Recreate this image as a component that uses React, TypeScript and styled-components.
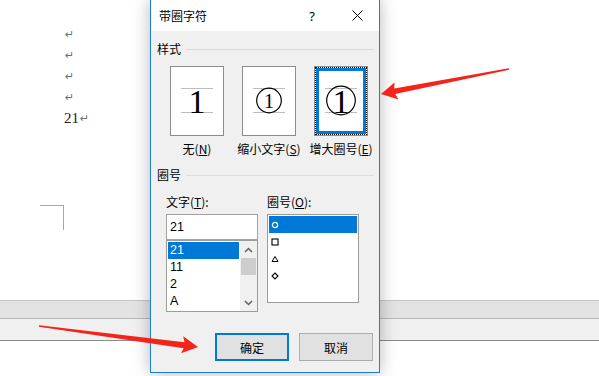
import styled, { createGlobalStyle } from 'styled-components';

const GlobalStyle = createGlobalStyle`
  html, body {
    margin: 0;
    padding: 0;
  }
  body {
    width: 599px;
    height: 376px;
    overflow: hidden;
    background: #fff;
    font-family: "Noto Sans CJK SC", "Noto Sans", sans-serif;
  }
`;

const Page = styled.div`
  position: relative;
  width: 599px;
  height: 376px;
  overflow: hidden;
  display: flex;
  flex-direction: column;
  background: #fff;
`;

// ---------------------------------------------
// document behind the dialog
// ---------------------------------------------
const Doc = styled.div`
  height: 300px;
  box-sizing: border-box;
  padding-top: 24px;
  display: flex;
  flex-direction: column;
`;

const Para = styled.div`
  height: 21px;
  line-height: 21px;
  padding-left: 64px;
  display: flex;
  align-items: center;
  font-family: "Liberation Serif", serif;
  font-size: 15px;
  color: #222;
`;

const ParaMark = styled.span`
  font-family: "DejaVu Sans", sans-serif;
  font-size: 11px;
  color: #6f6f6f;
  margin-left: 1px;
`;

const CornerMark = styled.div`
  width: 23px;
  height: 24px;
  margin: 76px 0 0 40px;
  border-top: 1px solid #a8a8a8;
  border-right: 1px solid #a8a8a8;
`;

const Bar = styled.div<{ $tone: 'dark' | 'light' }>`
  box-sizing: border-box;
  height: ${(p) => (p.$tone === 'dark' ? 18 : 23)}px;
  background: ${(p) => (p.$tone === 'dark' ? '#e3e3e3' : '#f0f0f0')};
  border-top: 1px solid ${(p) => (p.$tone === 'dark' ? '#c6c6c6' : '#b8b8b8')};
  border-bottom: ${(p) => (p.$tone === 'light' ? '1px solid #8a8a8a' : 'none')};
`;

// ---------------------------------------------
// dialog window
// ---------------------------------------------
const Dialog = styled.div`
  position: absolute;
  left: 150px;
  top: -1px;
  width: 230px;
  height: 374px;
  box-sizing: border-box;
  border: 1px solid #1a7fd5;
  display: flex;
  flex-direction: column;
  box-shadow: 0 0 16px rgba(0, 0, 0, 0.28);
  font-size: 12px;
  color: #000;
`;

const TitleBar = styled.div`
  height: 31px;
  flex: none;
  background: #fff;
  display: flex;
  align-items: center;
  padding-left: 8px;
`;

const Title = styled.div`
  flex: 1;
  font-size: 12px;
  line-height: 16px;
`;

const HelpButton = styled.div`
  width: 30px;
  margin-right: 8px;
  text-align: center;
  font-family: "Noto Sans", sans-serif;
  font-size: 13px;
`;

const CloseButton = styled.div`
  width: 44px;
  height: 31px;
  display: flex;
  align-items: center;
  justify-content: center;
`;

const Body = styled.div`
  flex: 1;
  background: #f0f0f0;
  display: flex;
  flex-direction: column;
  padding: 10px 0 11px 6px;
`;

const GroupHeader = styled.div<{ $gap?: number }>`
  display: flex;
  align-items: center;
  gap: 5px;
  margin-top: ${(p) => p.$gap ?? 0}px;
  margin-right: 5px;
  line-height: 16px;

  &::after {
    content: '';
    flex: 1;
    height: 1px;
    background: #dcdcdc;
  }
`;

const StyleRow = styled.div`
  display: grid;
  grid-template-columns: repeat(3, 72px);
  margin: 9px 0 0 4px;
`;

const StyleOption = styled.div`
  display: flex;
  flex-direction: column;
  align-items: center;
`;

const Preview = styled.div<{ $selected?: boolean }>`
  width: 54px;
  height: 70px;
  box-sizing: border-box;
  border: 1px solid #8c8c8c;
  background: #fff;
  display: flex;
  align-items: center;
  justify-content: center;
  ${(p) =>
    p.$selected &&
    `
    outline: 1px dotted #000;
    outline-offset: -2px;
    box-shadow: inset 0 0 0 1px #fff, inset 0 0 0 4px #0078d7;
  `}
`;

const OptionLabel = styled.div`
  margin-top: 5px;
  line-height: 16px;
  white-space: nowrap;

  u {
    text-underline-offset: 1px;
  }
`;

const Fields = styled.div`
  display: flex;
  gap: 9px;
  margin: 11px 0 0 9px;
`;

const Field = styled.div`
  width: 92px;
  display: flex;
  flex-direction: column;
`;

const FieldLabel = styled.div`
  line-height: 16px;
  margin-bottom: 4px;
`;

const TextInput = styled.div`
  height: 26px;
  box-sizing: border-box;
  border: 1px solid #a2a2a2;
  background: #fff;
  display: flex;
  align-items: center;
  padding-left: 3px;
  font-family: "Liberation Sans", Arial, sans-serif;
  font-size: 12.5px;
  line-height: 16px;
`;

const ListBox = styled.div<{ $height: number }>`
  height: ${(p) => p.$height}px;
  box-sizing: border-box;
  border: 1px solid #9c9c9c;
  background: #fff;
  display: flex;
  overflow: hidden;
`;

const Rows = styled.div`
  flex: 1;
  padding: 1px;
  display: flex;
  flex-direction: column;
`;

const Row = styled.div<{ $selected?: boolean }>`
  height: 17px;
  line-height: 17px;
  flex: none;
  display: flex;
  align-items: center;
  padding-left: 2px;
  font-family: "Liberation Sans", Arial, sans-serif;
  font-size: 12.5px;
  background: ${(p) => (p.$selected ? '#0078d7' : 'transparent')};
  color: ${(p) => (p.$selected ? '#fff' : '#000')};
`;

const Scrollbar = styled.div`
  width: 17px;
  flex: none;
  background: #f0f0f0;
  display: flex;
  flex-direction: column;
`;

const ScrollArrow = styled.div`
  height: 17px;
  flex: none;
  display: flex;
  align-items: center;
  justify-content: center;
`;

const ScrollTrack = styled.div`
  flex: 1;
  display: flex;
  flex-direction: column;
  align-items: center;
`;

const ScrollThumb = styled.div`
  width: 15px;
  height: 17px;
  background: #cdcdcd;
`;

const Buttons = styled.div`
  margin-top: auto;
  display: flex;
  justify-content: flex-end;
  gap: 10px;
  padding-right: 6px;
`;

const Button = styled.div<{ $primary?: boolean }>`
  width: 74px;
  height: 28px;
  box-sizing: border-box;
  background: #e1e1e1;
  border: ${(p) => (p.$primary ? '2px solid #0078d7' : '1px solid #adadad')};
  display: flex;
  align-items: center;
  justify-content: center;
  font-size: 12px;
`;

const Arrows = styled.svg`
  position: absolute;
  left: 0;
  top: 0;
  pointer-events: none;
`;

// ---------------------------------------------
// drawings
// ---------------------------------------------
function PreviewArt({ kind }: { kind: 'none' | 'shrink' | 'enlarge' }) {
  return (
    <svg width="52" height="68" viewBox="0 0 52 68">
      <line x1="10" y1="21.5" x2="42" y2="21.5" stroke="#bdbdbd" />
      <line x1="10" y1="45.5" x2="42" y2="45.5" stroke="#bdbdbd" />
      {kind === 'shrink' && <circle cx="26" cy="33.5" r="12.3" fill="none" stroke="#000" strokeWidth="1.2" />}
      {kind === 'enlarge' && <circle cx="26" cy="33.5" r="14.3" fill="none" stroke="#000" strokeWidth="1.2" />}
      <text
        x="26"
        y={kind === 'shrink' ? 40.5 : 45.5}
        textAnchor="middle"
        fontFamily="Liberation Serif, serif"
        fontSize={kind === 'shrink' ? 20 : 34}
        fill="#000"
      >
        1
      </text>
    </svg>
  );
}

function Chevron({ up }: { up?: boolean }) {
  return (
    <svg width="9" height="6" viewBox="0 0 9 6">
      <path d={up ? 'M1 5L4.5 1.5L8 5' : 'M1 1L4.5 4.5L8 1'} fill="none" stroke="#606060" strokeWidth="1.5" />
    </svg>
  );
}

function Shape({ kind, color }: { kind: 'circle' | 'square' | 'triangle' | 'diamond'; color: string }) {
  return (
    <svg width="8" height="8" viewBox="0 0 8 8">
      {kind === 'circle' && <circle cx="4" cy="4" r="2.6" fill="none" stroke={color} strokeWidth="1.2" />}
      {kind === 'square' && <rect x="1" y="1" width="6" height="6" fill="none" stroke={color} strokeWidth="1.1" />}
      {kind === 'triangle' && <path d="M4 1.5L7 6.5H1Z" fill="none" stroke={color} strokeWidth="1" />}
      {kind === 'diamond' && <path d="M4 1L7 4L4 7L1 4Z" fill="none" stroke={color} strokeWidth="1.1" />}
    </svg>
  );
}

const paras = ['', '', '', '', '21'];
const chars = ['21', '11', '2', 'A'];
const shapes = ['circle', 'square', 'triangle', 'diamond'] as const;

export default function App() {
  return (
    <Page>
      <GlobalStyle />

      <Doc>
        {paras.map((text, i) => (
          <Para key={i}>
            {text}
            <ParaMark>↵</ParaMark>
          </Para>
        ))}
        <CornerMark />
      </Doc>
      <Bar $tone="dark" />
      <Bar $tone="light" />

      <Dialog>
        <TitleBar>
          <Title>带圈字符</Title>
          <HelpButton>?</HelpButton>
          <CloseButton>
            <svg width="11" height="11" viewBox="0 0 11 11">
              <path d="M0.5 0.5L10.5 10.5M10.5 0.5L0.5 10.5" stroke="#000" strokeWidth="1" />
            </svg>
          </CloseButton>
        </TitleBar>

        <Body>
          <GroupHeader>样式</GroupHeader>
          <StyleRow>
            <StyleOption>
              <Preview>
                <PreviewArt kind="none" />
              </Preview>
              <OptionLabel>
                无(<u>N</u>)
              </OptionLabel>
            </StyleOption>
            <StyleOption>
              <Preview>
                <PreviewArt kind="shrink" />
              </Preview>
              <OptionLabel>
                缩小文字(<u>S</u>)
              </OptionLabel>
            </StyleOption>
            <StyleOption>
              <Preview $selected>
                <PreviewArt kind="enlarge" />
              </Preview>
              <OptionLabel>
                增大圈号(<u>E</u>)
              </OptionLabel>
            </StyleOption>
          </StyleRow>

          <GroupHeader $gap={10}>圈号</GroupHeader>
          <Fields>
            <Field>
              <FieldLabel>
                文字(<u>T</u>):
              </FieldLabel>
              <TextInput>21</TextInput>
              <ListBox $height={72}>
                <Rows>
                  {chars.map((c, i) => (
                    <Row key={c} $selected={i === 0}>
                      {c}
                    </Row>
                  ))}
                </Rows>
                <Scrollbar>
                  <ScrollArrow>
                    <Chevron up />
                  </ScrollArrow>
                  <ScrollTrack>
                    <ScrollThumb />
                  </ScrollTrack>
                  <ScrollArrow>
                    <Chevron />
                  </ScrollArrow>
                </Scrollbar>
              </ListBox>
            </Field>
            <Field>
              <FieldLabel>
                圈号(<u>O</u>):
              </FieldLabel>
              <ListBox $height={89}>
                <Rows>
                  {shapes.map((s, i) => (
                    <Row key={s} $selected={i === 0}>
                      <Shape kind={s} color={i === 0 ? '#fff' : '#000'} />
                    </Row>
                  ))}
                </Rows>
              </ListBox>
            </Field>
          </Fields>

          <Buttons>
            <Button $primary>确定</Button>
            <Button>取消</Button>
          </Buttons>
        </Body>
      </Dialog>

      <Arrows width="599" height="376" viewBox="0 0 599 376">
        <polygon
          fill="#f5241a"
          points="509.2,69.8 395.2,94 398.5,99.5 381,94 394.5,82.6 394.2,88.6 508.8,68.2"
        />
        <polygon
          fill="#f5241a"
          points="39.1,325.2 184.5,342.2 183.2,336.3 198,347 181,353.3 183.7,348.2 38.9,326.8"
        />
      </Arrows>
    </Page>
  );
}
